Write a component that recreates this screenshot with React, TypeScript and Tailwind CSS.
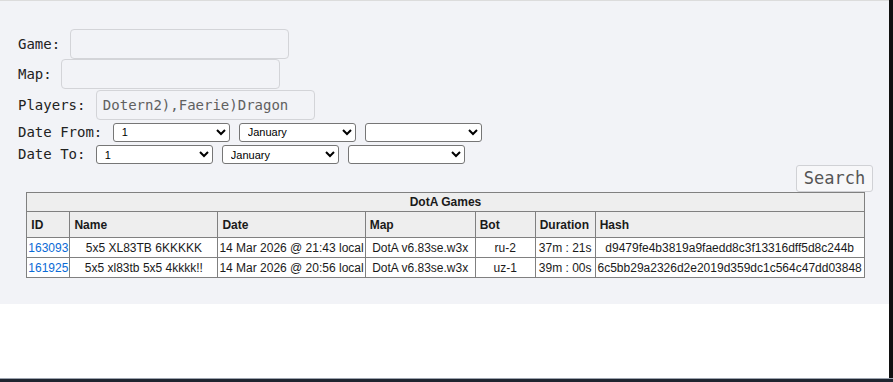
import React from "react";

const MONO = { fontFamily: '"DejaVu Sans Mono", "Liberation Mono", monospace' };

const GAMES = [
  {
    id: "163093",
    name: "5x5 XL83TB 6KKKKK",
    date: "14 Mar 2026 @ 21:43 local",
    map: "DotA v6.83se.w3x",
    bot: "ru-2",
    duration: "37m : 21s",
    hash: "d9479fe4b3819a9faedd8c3f13316dff5d8c244b",
  },
  {
    id: "161925",
    name: "5x5 xl83tb 5x5 4kkkk!!",
    date: "14 Mar 2026 @ 20:56 local",
    map: "DotA v6.83se.w3x",
    bot: "uz-1",
    duration: "39m : 00s",
    hash: "6c5bb29a2326d2e2019d359dc1c564c47dd03848",
  },
];

function DateSelects() {
  const cls =
    "h-[19px] w-[117px] rounded-[3px] border border-[#767676] bg-white pl-[4px] text-[11px] text-black font-['Liberation_Sans',sans-serif]";
  return (
    <div className="flex gap-[9px]">
      <select defaultValue="1" className={cls}>
        <option value="1">1</option>
        <option value="2">2</option>
      </select>
      <select defaultValue="January" className={cls}>
        <option value="January">January</option>
        <option value="February">February</option>
      </select>
      <select defaultValue="" className={cls}>
        <option value=""></option>
        <option value="2026">2026</option>
      </select>
    </div>
  );
}

export default function App() {
  const inputCls =
    "h-[30px] w-[219px] rounded-[4px] border border-[#d3d4d8] bg-[#f2f3f7] px-[6px] text-[14px] text-[#606060] outline-none";
  const th = "border border-[#808080] bg-[#eeeeee] px-[4px] text-left font-bold";
  const td = "border border-[#808080] bg-white px-[1px] text-center whitespace-nowrap";

  return (
    <div className="flex h-[382px] flex-col bg-white">
      <div className="flex flex-1">
        <div className="flex-1 border-t border-[#dcdcdc]">
          <div className="bg-[#f2f3f7] px-[18px] pb-[26px] pt-[28px] text-[14px] text-[#222]" style={MONO}>
            <div className="flex items-center h-[30px]">
              <span className="whitespace-pre">Game: </span>
              <input className={inputCls + " ml-[1px]"} style={MONO} />
            </div>
            <div className="flex items-center h-[30px]">
              <span className="whitespace-pre">Map: </span>
              <input className={inputCls + " ml-[1px]"} style={MONO} />
            </div>
            <div className="mt-[1px] flex items-center h-[30px]">
              <span className="whitespace-pre">Players: </span>
              <input className={inputCls + " ml-[2px]"} style={MONO} defaultValue="Dotern2),Faerie)Dragon" />
            </div>
            <div className="mt-[2px] flex items-center h-[20px]">
              <span className="whitespace-pre">Date From: </span>
              <span className="ml-[2px]">
                <DateSelects />
              </span>
            </div>
            <div className="mt-[3px] flex items-center h-[19px]">
              <span className="whitespace-pre">Date To: </span>
              <span className="ml-[2px]">
                <DateSelects />
              </span>
            </div>
            <div className="mt-[1px] flex justify-end">
              <button
                className="mr-[-2px] h-[27px] w-[77px] rounded-[3px] border border-[#d0d1d5] bg-[#f7f7f9] text-[17px] text-[#555]"
                style={MONO}
              >
                Search
              </button>
            </div>
            <div className="flex justify-center pl-[2px]">
              <table className="table-fixed border-collapse text-[12px] text-[#1a1a1a] font-['Liberation_Sans',Arial,sans-serif]">
                <colgroup>
                  <col className="w-[41px]" />
                  <col className="w-[148px]" />
                  <col className="w-[147px]" />
                  <col className="w-[110px]" />
                  <col className="w-[60px]" />
                  <col className="w-[60px]" />
                  <col className="w-[269px]" />
                </colgroup>
                <thead>
                  <tr className="h-[19px]">
                    <th colSpan={7} className="border border-[#808080] bg-[#eeeeee] text-center font-bold">
                      DotA Games
                    </th>
                  </tr>
                  <tr className="h-[26px]">
                    <th className={th}>ID</th>
                    <th className={th}>Name</th>
                    <th className={th}>Date</th>
                    <th className={th}>Map</th>
                    <th className={th}>Bot</th>
                    <th className={th}>Duration</th>
                    <th className={th}>Hash</th>
                  </tr>
                </thead>
                <tbody>
                  {GAMES.map((g) => (
                    <tr key={g.id} className="h-[20px]">
                      <td className={td + " text-left"}>
                        <a href="#" className="text-[#0a6ad6]">
                          {g.id}
                        </a>
                      </td>
                      <td className={td}>{g.name}</td>
                      <td className={td}>{g.date}</td>
                      <td className={td}>{g.map}</td>
                      <td className={td}>{g.bot}</td>
                      <td className={td}>{g.duration}</td>
                      <td className={td}>{g.hash}</td>
                    </tr>
                  ))}
                </tbody>
              </table>
            </div>
          </div>
        </div>
        <div className="w-[4px] bg-[#101010]" />
      </div>
      <div className="h-[1px] bg-[#9ca3af]" />
      <div className="h-[3px] bg-[#1f2530]" />
    </div>
  );
}
